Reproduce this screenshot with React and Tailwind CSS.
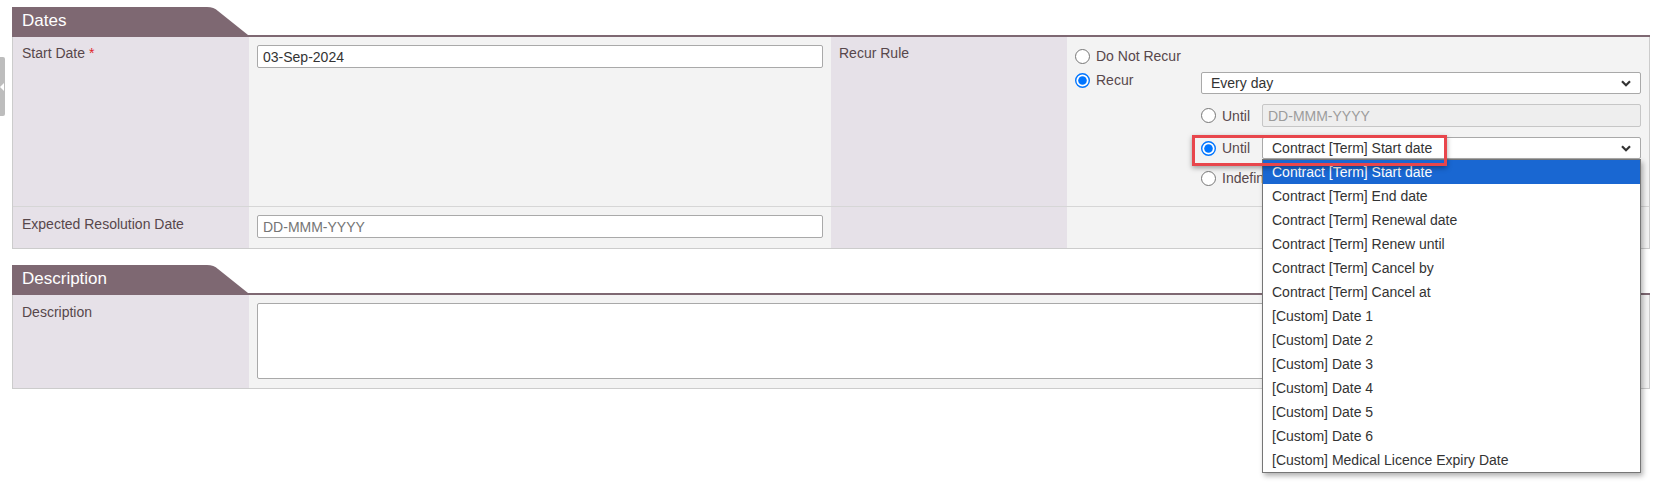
const PURPLE = 'bg-[#7e6872]';

const dateOptions = [
  'Contract [Term] Start date',
  'Contract [Term] End date',
  'Contract [Term] Renewal date',
  'Contract [Term] Renew until',
  'Contract [Term] Cancel by',
  'Contract [Term] Cancel at',
  '[Custom] Date 1',
  '[Custom] Date 2',
  '[Custom] Date 3',
  '[Custom] Date 4',
  '[Custom] Date 5',
  '[Custom] Date 6',
  '[Custom] Medical Licence Expiry Date',
];

const Radio = ({ checked }) => (
  <svg width="15" height="15" viewBox="0 0 15 15" className="block shrink-0">
    {checked ? (
      <>
        <circle cx="7.5" cy="7.5" r="6.8" fill="white" stroke="#0075ff" strokeWidth="1.4" />
        <circle cx="7.5" cy="7.5" r="4.3" fill="#0075ff" />
      </>
    ) : (
      <circle cx="7.5" cy="7.5" r="7" fill="white" stroke="#767676" strokeWidth="1" />
    )}
  </svg>
);

const RadioLabel = ({ checked, children, className = '' }) => (
  <div className={`flex h-[16px] items-center gap-[6px] text-[#57474b] ${className}`}>
    <Radio checked={checked} />
    <span className="whitespace-nowrap">{children}</span>
  </div>
);

const Chevron = () => (
  <svg width="10" height="7" viewBox="0 0 10 7" className="block">
    <path d="M1 1.2 L5 5.2 L9 1.2" fill="none" stroke="#333" strokeWidth="2.2" />
  </svg>
);

const SelectBox = ({ value }) => (
  <div className="flex h-[22px] items-center justify-between rounded-[2px] border border-[#a9a9a9] bg-white pl-[9px] pr-[9px] text-[#333]">
    <span>{value}</span>
    <Chevron />
  </div>
);

const TextBox = ({ value, placeholder, disabled }) => (
  <div
    className={`flex h-[23px] items-center rounded-[2px] border px-[5px] ${
      disabled ? 'border-[#c6c6c6] bg-[#eeeeee] text-[#9c9c9c]' : 'border-[#a9a9a9] bg-white'
    } ${value ? 'text-[#333]' : disabled ? '' : 'text-[#757575]'}`}
  >
    {value || placeholder}
  </div>
);

const SectionHeader = ({ title }) => (
  <div>
    <div className="flex h-[28px]">
      <div className={`w-[193px] ${PURPLE} pl-[10px] text-[17px] leading-[28px] text-white`}>{title}</div>
      <svg width="43" height="28" viewBox="0 0 43 28" className="block">
        <path d="M0 0 H2 Q9 0 13 4 L43 28 H0 Z" fill="#7e6872" />
      </svg>
    </div>
    <div className={`h-[2px] ${PURPLE}`} />
  </div>
);

const App = () => {
  return (
    <div className="relative h-[485px] w-[1657px] overflow-hidden bg-white font-['Liberation_Sans',Arial,sans-serif] text-[14px] leading-[16px]">
      {/* collapse handle on the left edge */}
      <div className="absolute left-0 top-[57px] flex h-[59px] w-[5px] items-center rounded-r-[2px] bg-[#bdbdbd]">
        <div className="h-0 w-0 border-y-[4px] border-r-[4px] border-y-transparent border-r-white" />
      </div>

      <div className="pl-[12px] pr-[7px] pt-[7px]">
        <SectionHeader title="Dates" />
        <div className="grid grid-cols-[236px_582px_236px_582px] border-x border-b border-[#cccccc]">
          {/* row 1 */}
          <div className="border-b border-[#d6d6d6] bg-[#e6e1e8] pl-[9px] pt-[8px] text-[#57474b]">
            Start Date <span className="text-[#e0262b]">*</span>
          </div>
          <div className="border-b border-[#d6d6d6] bg-[#f3f3f3] px-[8px] pt-[8px]">
            <TextBox value="03-Sep-2024" />
          </div>
          <div className="border-b border-[#d6d6d6] bg-[#e6e1e8] pl-[8px] pt-[8px] text-[#57474b]">Recur Rule</div>
          <div className="border-b border-[#d6d6d6] bg-[#f3f3f3] pb-[20px] pl-[8px] pr-[8px] pt-[11px]">
            <RadioLabel>Do Not Recur</RadioLabel>
            <div className="mt-[8px] flex">
              <div className="w-[126px]">
                <RadioLabel checked>Recur</RadioLabel>
              </div>
              <div className="flex-1">
                <SelectBox value="Every day" />
                <div className="mt-[10px] flex items-center">
                  <RadioLabel className="w-[61px]">Until</RadioLabel>
                  <div className="flex-1">
                    <TextBox placeholder="DD-MMM-YYYY" disabled />
                  </div>
                </div>
                <div className="relative mt-[10px] flex items-center">
                  <RadioLabel checked className="w-[61px]">Until</RadioLabel>
                  <div className="relative flex-1">
                    <SelectBox value="Contract [Term] Start date" />
                    <ul className="absolute left-0 right-0 top-full z-10 border border-[#767676] bg-white shadow-[2px_3px_5px_rgba(0,0,0,0.3)]">
                      {dateOptions.map((opt, i) => (
                        <li
                          key={opt}
                          className={`flex h-[24px] items-center whitespace-nowrap pl-[9px] ${
                            i === 0 ? 'bg-[#1967d2] text-white' : 'text-[#333]'
                          }`}
                        >
                          {opt}
                        </li>
                      ))}
                    </ul>
                  </div>
                  <div className="pointer-events-none absolute left-[-9px] top-[-2px] z-20 h-[31px] w-[255px] border-[3px] border-[#e8464c] shadow-[0_2px_5px_rgba(0,0,0,0.35)]" />
                </div>
                <RadioLabel className="mt-[11px]">Indefinitely</RadioLabel>
              </div>
            </div>
          </div>

          {/* row 2 */}
          <div className="bg-[#e6e1e8] pl-[9px] pt-[9px] text-[#57474b]">Expected Resolution Date</div>
          <div className="bg-[#f3f3f3] px-[8px] pb-[10px] pt-[8px]">
            <TextBox placeholder="DD-MMM-YYYY" />
          </div>
          <div className="bg-[#e6e1e8]" />
          <div className="bg-[#f3f3f3]" />
        </div>

        <div className="mt-[16px]">
          <SectionHeader title="Description" />
          <div className="grid grid-cols-[236px_1fr] border-x border-b border-[#cccccc]">
            <div className="bg-[#e6e1e8] pl-[9px] pt-[9px] text-[#57474b]">Description</div>
            <div className="bg-[#f3f3f3] px-[8px] pb-[9px] pt-[8px]">
              <div className="h-[76px] rounded-[2px] border border-[#a9a9a9] bg-white" />
            </div>
          </div>
        </div>
      </div>
    </div>
  );
};

export default App;
